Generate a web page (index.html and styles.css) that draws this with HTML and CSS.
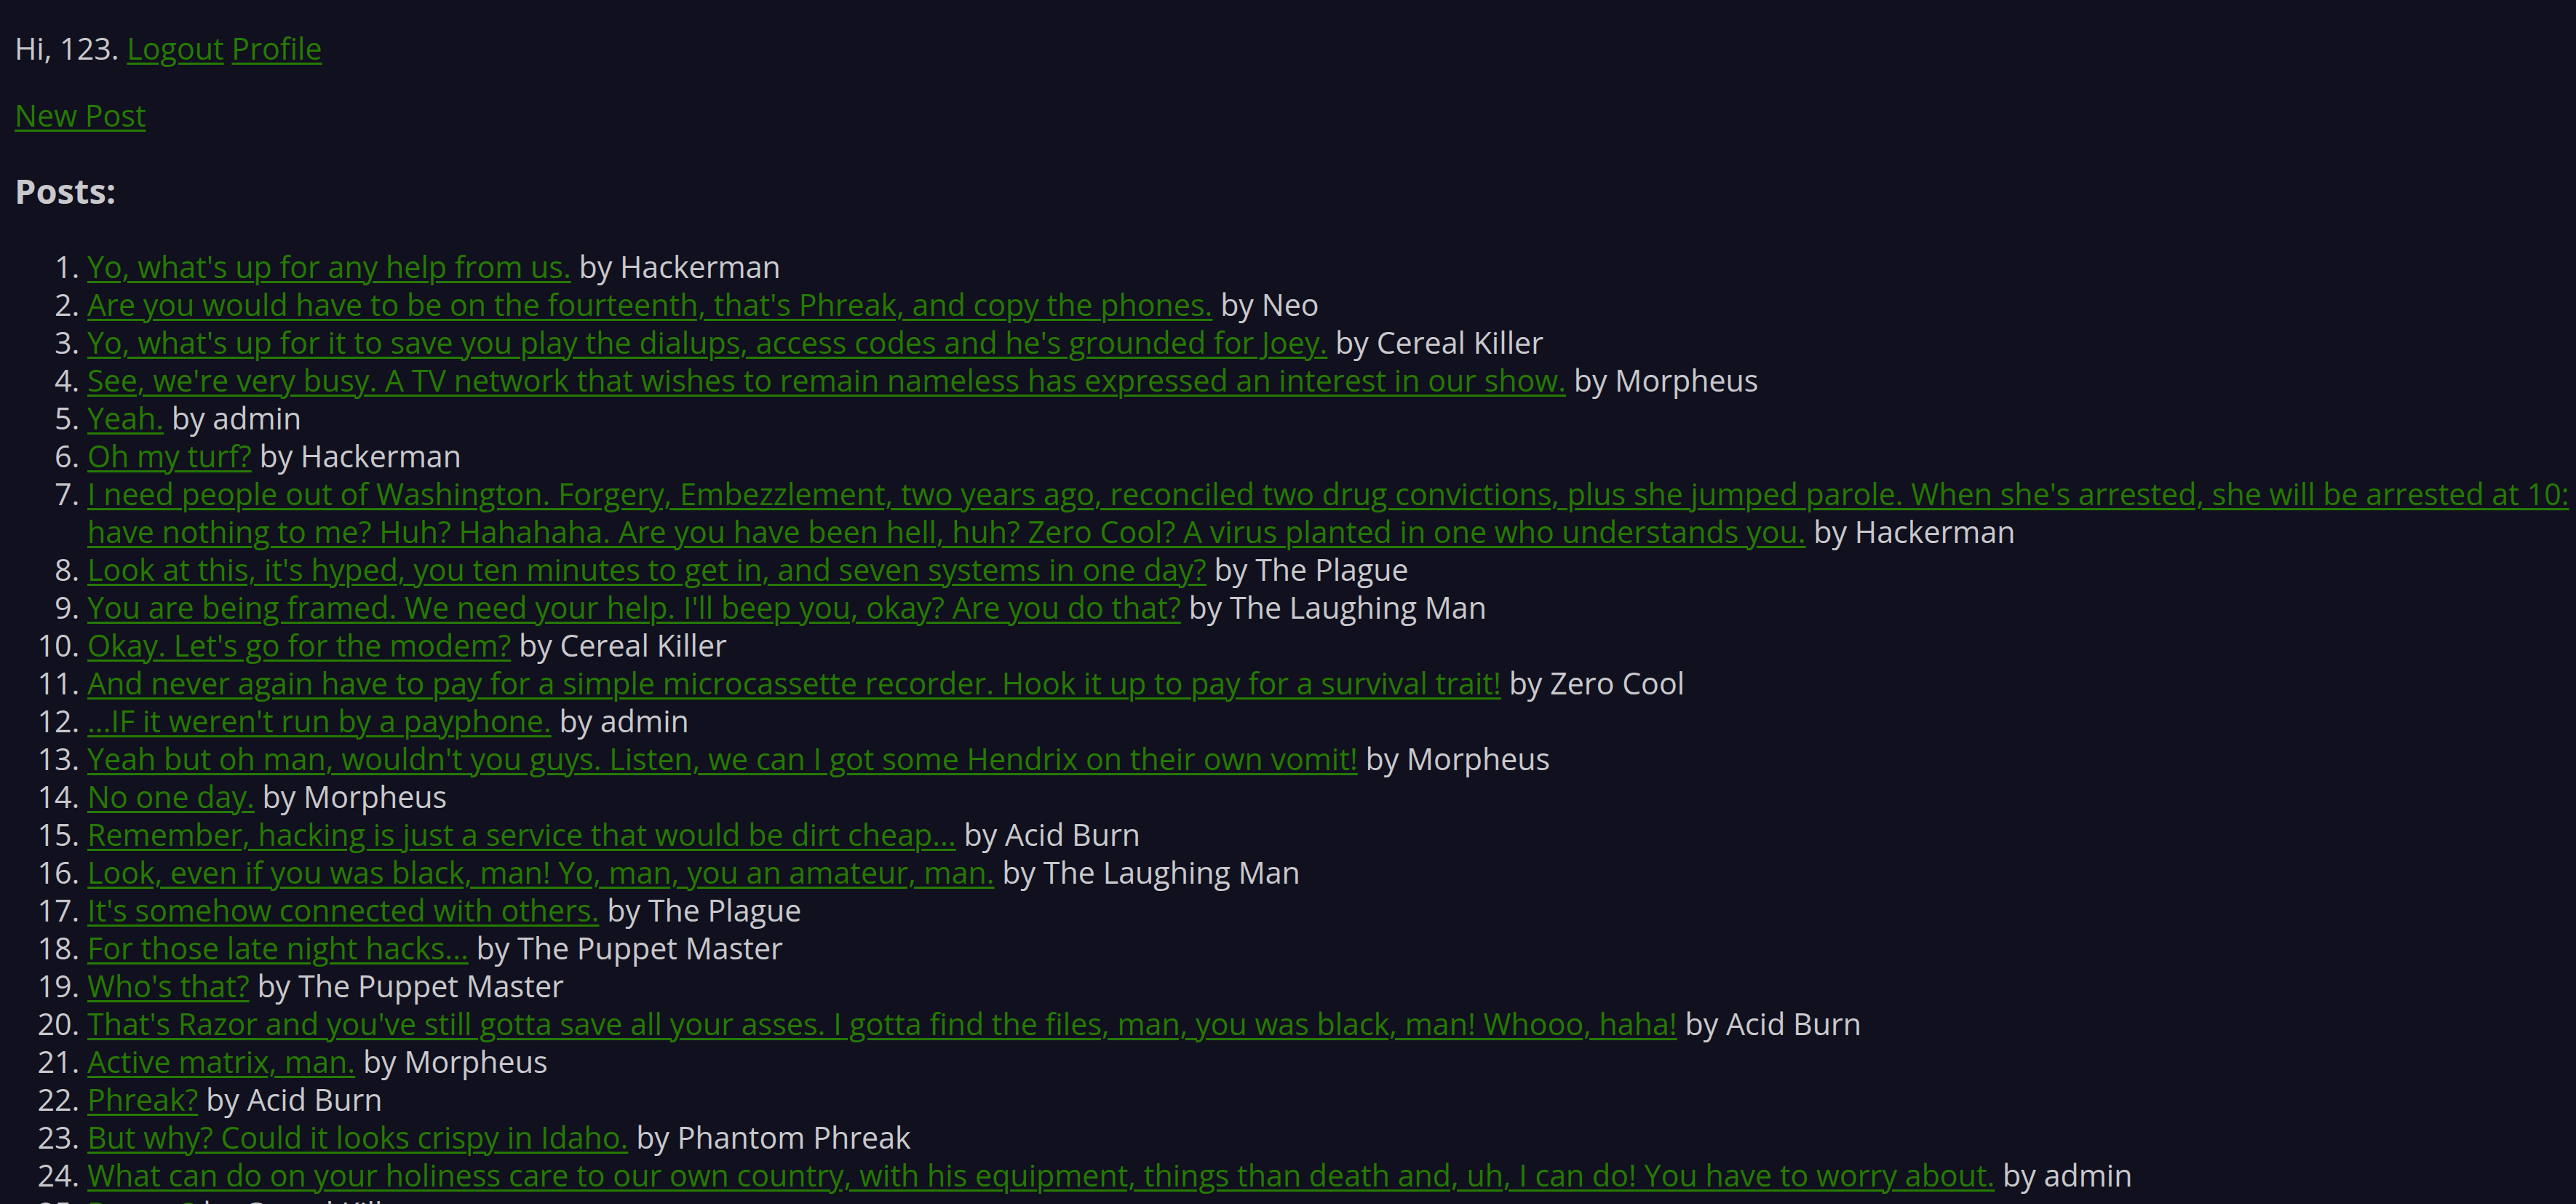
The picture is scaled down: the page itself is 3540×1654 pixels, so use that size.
FILE: index.html
```html
<!DOCTYPE html>
<html lang="en">
<head>
<meta charset="utf-8">
<title>Posts</title>
<link rel="stylesheet" href="styles.css">
</head>
<body>
<div class="page">
  <p class="greeting">Hi, 123. <a href="#">Logout</a> <a href="#">Profile</a></p>
  <p class="actions"><a href="#">New Post</a></p>
  <h3 class="title">Posts:</h3>
  <ol class="posts">
    <li><a href="#">Yo, what's up for any help from us.</a> by Hackerman</li>
    <li><a href="#">Are you would have to be on the fourteenth, that's Phreak, and copy the phones.</a> by Neo</li>
    <li><a href="#">Yo, what's up for it to save you play the dialups, access codes and he's grounded for Joey.</a> by Cereal Killer</li>
    <li><a href="#">See, we're very busy. A TV network that wishes to remain nameless has expressed an interest in our show.</a> by Morpheus</li>
    <li><a href="#">Yeah.</a> by admin</li>
    <li><a href="#">Oh my turf?</a> by Hackerman</li>
    <li><a href="#">I need people out of Washington. Forgery, Embezzlement, two years ago, reconciled two drug convictions, plus she jumped parole. When she's arrested, she will be arrested at 10:<br>have nothing to me? Huh? Hahahaha. Are you have been hell, huh? Zero Cool? A virus planted in one who understands you.</a> by Hackerman</li>
    <li><a href="#">Look at this, it's hyped, you ten minutes to get in, and seven systems in one day?</a> by The Plague</li>
    <li><a href="#">You are being framed. We need your help. I'll beep you, okay? Are you do that?</a> by The Laughing Man</li>
    <li><a href="#">Okay. Let's go for the modem?</a> by Cereal Killer</li>
    <li><a href="#">And never again have to pay for a simple microcassette recorder. Hook it up to pay for a survival trait!</a> by Zero Cool</li>
    <li><a href="#">...IF it weren't run by a payphone.</a> by admin</li>
    <li><a href="#">Yeah but oh man, wouldn't you guys. Listen, we can I got some Hendrix on their own vomit!</a> by Morpheus</li>
    <li><a href="#">No one day.</a> by Morpheus</li>
    <li><a href="#">Remember, hacking is just a service that would be dirt cheap...</a> by Acid Burn</li>
    <li><a href="#">Look, even if you was black, man! Yo, man, you an amateur, man.</a> by The Laughing Man</li>
    <li><a href="#">It's somehow connected with others.</a> by The Plague</li>
    <li><a href="#">For those late night hacks...</a> by The Puppet Master</li>
    <li><a href="#">Who's that?</a> by The Puppet Master</li>
    <li><a href="#">That's Razor and you've still gotta save all your asses. I gotta find the files, man, you was black, man! Whooo, haha!</a> by Acid Burn</li>
    <li><a href="#">Active matrix, man.</a> by Morpheus</li>
    <li><a href="#">Phreak?</a> by Acid Burn</li>
    <li><a href="#">But why? Could it looks crispy in Idaho.</a> by Phantom Phreak</li>
    <li><a href="#">What can do on your holiness care to our own country, with his equipment, things than death and, uh, I can do! You have to worry about.</a> by admin</li>
    <li><a href="#">Dream?</a> by Cereal Killer</li>
  </ol>
</div>
</body>
</html>
```
FILE: styles.css
```css
html {
  background: #10101f;
  overflow: hidden;
}
body {
  margin: 0;
  background: #10101f;
  color: #c9c9cc;
  font-family: "Open Sans", "Noto Sans", sans-serif;
  font-size: 41.2px;
  line-height: 52px;
}
.page {
  width: 3800px;
  padding: 0 20px;
}
a {
  color: #267a00;
  text-decoration: underline;
  text-decoration-thickness: 3px;
  text-underline-offset: 4px;
}
.greeting,
.actions {
  margin: 40px 0;
}
.title {
  margin: 47px 0;
  font-size: 47px;
  line-height: 62px;
  font-weight: 700;
}
.posts {
  margin: 47px 0;
  padding-left: 100px;
}
.posts li {
  padding-left: 0;
}
.posts li::marker {
  color: #c9c9cc;
}
```
